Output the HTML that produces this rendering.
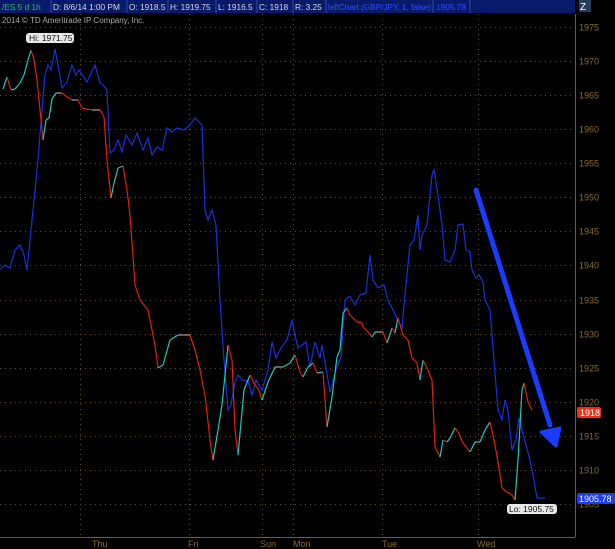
<!DOCTYPE html>
<html><head><meta charset="utf-8"><style>
html,body{margin:0;padding:0;background:#000;width:615px;height:549px;overflow:hidden;font-family:"Liberation Sans",sans-serif}
</style></head><body>
<svg id="s" width="615" height="549" xmlns="http://www.w3.org/2000/svg" style="position:absolute;left:0;top:0">
<rect width="615" height="549" fill="#000"/>
<g id="grid" stroke="#6b4a1a" stroke-width="1" stroke-dasharray="1,4"></g>
<line x1="575.5" y1="14" x2="575.5" y2="537" stroke="#7a5a2a"/>
<line x1="0" y1="537.5" x2="575" y2="537.5" stroke="#7a5a2a"/>
<g id="ylab" font-size="9" fill="#8a6a30"></g>
<g font-size="9" fill="#8a6a30">
<text x="92" y="547">Thu</text><text x="188" y="547">Fri</text><text x="260" y="547">Sun</text><text x="293" y="547">Mon</text><text x="382" y="547">Tue</text><text x="477" y="547">Wed</text>
</g>
<polyline id="blue" fill="none" stroke="#1a2fe0" stroke-width="1.2" points=""/>
<g id="price" stroke-width="1.2"></g>
<line x1="476" y1="190" x2="550" y2="425" stroke="#1a3cff" stroke-width="5" stroke-linecap="round"/>
<polygon points="541,432 560,428 556,446" fill="#1a3cff" stroke="#1a3cff" stroke-width="3" stroke-linejoin="round"/>
<rect x="0" y="0" width="575" height="13" fill="#0a1a6a"/>
<g stroke="#2a4aa0"><line x1="51" y1="0" x2="51" y2="13"/><line x1="127" y1="0" x2="127" y2="13"/><line x1="168" y1="0" x2="168" y2="13"/><line x1="216" y1="0" x2="216" y2="13"/><line x1="257" y1="0" x2="257" y2="13"/><line x1="293" y1="0" x2="293" y2="13"/><line x1="326" y1="0" x2="326" y2="13"/><line x1="433" y1="0" x2="433" y2="13"/><line x1="470" y1="0" x2="470" y2="13"/></g>
<g font-size="8.3" fill="#d8d8d8">
<text x="2" y="10" fill="#22c060">/ES 5 d 1h</text>
<text x="53" y="10">D: 8/6/14 1:00 PM</text>
<text x="129" y="10">O: 1918.5</text>
<text x="170" y="10">H: 1919.75</text>
<text x="218" y="10">L: 1916.5</text>
<text x="259" y="10">C: 1918</text>
<text x="295" y="10">R: 3.25</text>
<text x="328" y="10" fill="#2a50ff" textLength="103" lengthAdjust="spacingAndGlyphs">leftChart (GBP/JPY, 1, false)</text>
<text x="436" y="10" fill="#2a50ff">1905.78</text>
</g>
<rect x="579" y="0" width="12" height="12" fill="#2a3a5a"/>
<text x="580" y="10" font-size="10" fill="#fff">Z</text>
<text x="2" y="23" font-size="8" fill="#aaa">2014 © TD Ameritrade IP Company, Inc.</text>
<rect x="26" y="33" width="48" height="10" rx="3" fill="#e8e8e8"/>
<text x="29" y="41" font-size="8.5" fill="#111">Hi: 1971.75</text>
<rect x="507" y="504" width="50" height="10" rx="3" fill="#e8e8e8"/>
<text x="509" y="512" font-size="8.5" fill="#111">Lo: 1905.75</text>
<rect x="577" y="407" width="24" height="11" rx="2" fill="#e8301a"/>
<text x="580" y="416" font-size="9" fill="#fff">1918</text>
<rect x="577" y="493" width="38" height="11" rx="2" fill="#1a3cff"/>
<text x="579" y="502" font-size="9" fill="#fff">1905.78</text>
</svg>
<script>
var ns="http://www.w3.org/2000/svg";
var g=document.getElementById('grid'),yl=document.getElementById('ylab');
for(var p=1975;p>=1905;p-=5){var y=Math.round(27+(1975-p)*6.814)+0.5;
var l=document.createElementNS(ns,'line');l.setAttribute('x1',0);l.setAttribute('x2',575);l.setAttribute('y1',y);l.setAttribute('y2',y);g.appendChild(l);
var t=document.createElementNS(ns,'text');t.setAttribute('x',579);t.setAttribute('y',y+3);t.textContent=p;yl.appendChild(t);}
[80,189,262,293,382,478].forEach(function(x){var l=document.createElementNS(ns,'line');l.setAttribute('x1',x+.5);l.setAttribute('x2',x+.5);l.setAttribute('y1',14);l.setAttribute('y2',537);g.appendChild(l);});
var blue=[[0,270],[5,265],[10,268],[15,250],[20,245],[24,255],[27,270],[31,230],[35,190],[38,160],[42,110],[45,75],[48,65],[51,70],[55,49],[58,65],[62,88],[67,82],[72,65],[76,75],[79,70],[87,82],[95,65],[100,83],[103,85],[107,90],[110,153],[114,150],[118,140],[122,152],[126,135],[132,145],[137,133],[143,150],[148,138],[152,155],[157,147],[162,150],[167,128],[172,132],[177,128],[184,130],[190,125],[195,118],[202,125],[205,210],[208,220],[212,210],[216,225],[220,300],[224,360],[228,410],[231,405],[235,382],[238,375],[242,380],[248,381],[252,395],[256,380],[262,390],[265,380],[268,370],[272,342],[276,358],[281,348],[287,340],[292,320],[295,335],[298,348],[302,345],[306,342],[310,367],[315,342],[320,358],[322,345],[325,362],[330,392],[336,370],[341,357],[345,300],[350,296],[355,305],[360,295],[366,293],[370,255],[373,280],[378,288],[384,285],[388,300],[392,308],[397,318],[402,328],[405,295],[410,245],[414,240],[418,215],[420,250],[422,235],[427,225],[432,175],[434,170],[438,195],[442,225],[445,260],[450,262],[455,250],[458,225],[463,224],[466,250],[470,252],[472,270],[476,278],[479,275],[483,282],[485,300],[490,310],[494,360],[498,410],[502,420],[505,400],[508,410],[512,450],[516,440],[519,418],[522,430],[526,445],[530,460],[533,475],[537,498],[545,498]];
document.getElementById('blue').setAttribute('points',blue.map(function(a){return a.join(',')}).join(' '));
var pr=[[3,89],[7,77],[11,90],[15,89],[20,83],[24,75],[28,60],[31,50],[34,60],[37,80],[40,110],[43,140],[46,120],[49,118],[52,99],[56,93],[62,93],[67,97],[72,100],[78,100],[82,108],[86,109],[92,110],[100,110],[104,117],[107,160],[111,198],[114,183],[118,168],[123,166],[127,190],[130,215],[135,285],[140,300],[148,310],[155,345],[158,368],[163,365],[170,340],[178,335],[190,335],[195,350],[200,370],[205,395],[210,440],[213,460],[218,430],[222,405],[228,345],[232,360],[235,430],[238,455],[244,390],[250,375],[255,385],[259,390],[262,400],[268,382],[275,367],[283,367],[290,363],[295,355],[300,372],[303,377],[308,367],[313,363],[317,373],[323,372],[327,427],[332,397],[337,357],[340,350],[343,313],[347,308],[350,315],[357,322],[362,323],[363,327],[368,332],[372,337],[375,332],[383,332],[387,343],[392,328],[395,333],[398,318],[403,335],[408,340],[412,358],[417,363],[420,380],[423,360],[427,368],[432,380],[435,447],[440,457],[443,440],[447,442],[450,438],[455,428],[458,432],[463,443],[470,452],[475,442],[480,442],[485,430],[490,422],[494,440],[498,462],[502,488],[507,492],[512,495],[515,500],[518,460],[520,425],[522,390],[524,383],[528,402],[532,410]];
var pg=document.getElementById('price');
for(var i=1;i<pr.length;i++){var a=pr[i-1],b=pr[i];var l=document.createElementNS(ns,'line');
l.setAttribute('x1',a[0]);l.setAttribute('y1',a[1]);l.setAttribute('x2',b[0]);l.setAttribute('y2',b[1]);
l.setAttribute('stroke',b[1]<a[1]?'#20c8b8':(b[1]>a[1]?'#e02010':'#a0a0a0'));pg.appendChild(l);}
</script>
</body></html>
